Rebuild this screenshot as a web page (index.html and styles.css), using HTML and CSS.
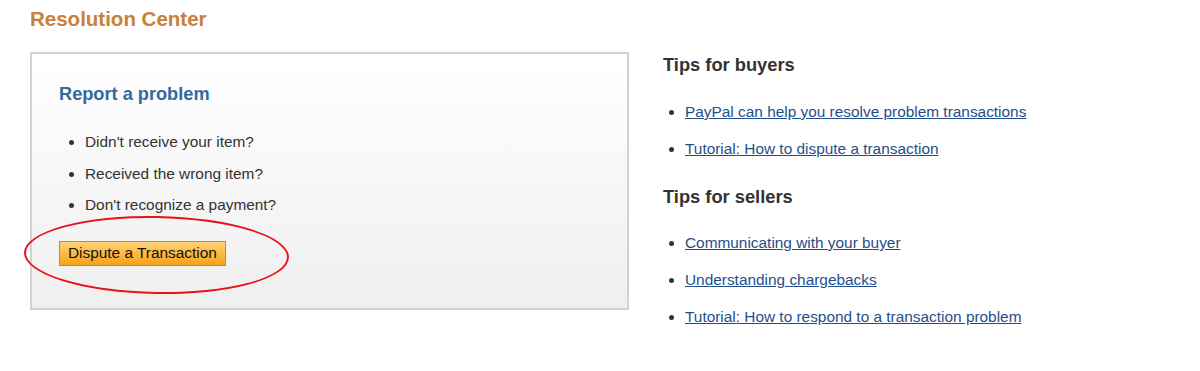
FILE: index.html
```html
<!DOCTYPE html>
<html lang="en">
<head>
  <meta charset="UTF-8">
  <title>Resolution Center</title>
  <link rel="stylesheet" href="styles.css">
</head>
<body>

  <h1 class="page-title">Resolution Center</h1>

  <div class="content">
    <!-- Report a problem box -->
    <div class="report-box">
      <h2>Report a problem</h2>
      <ul class="problem-list">
        <li>Didn't receive your item?</li>
        <li>Received the wrong item?</li>
        <li>Don't recognize a payment?</li>
      </ul>
      <div class="btn-wrap">
        <button class="btn-dispute">Dispute a Transaction</button>
        <span class="circle-mark"></span>
      </div>
    </div>

    <!-- Tips -->
    <div class="tips">
      <h3>Tips for buyers</h3>
      <ul class="tips-list">
        <li><a href="#">PayPal can help you resolve problem transactions</a></li>
        <li><a href="#">Tutorial: How to dispute a transaction</a></li>
      </ul>
      <h3>Tips for sellers</h3>
      <ul class="tips-list sellers">
        <li><a href="#">Communicating with your buyer</a></li>
        <li><a href="#">Understanding chargebacks</a></li>
        <li><a href="#">Tutorial: How to respond to a transaction problem</a></li>
      </ul>
    </div>
  </div>

</body>
</html>
```

FILE: styles.css
```css
body {
  margin: 0;
  padding: 0 30px;
  font-family: "Liberation Sans", Arial, sans-serif;
  background-color: #fff;
  color: #333;
}

.page-title {
  margin: 0;
  padding-top: 8px;
  height: 44px;
  font-size: 20.5px;
  line-height: 22px;
  color: #c8803a;
}

.content {
  display: flex;
  align-items: flex-start;
  gap: 34px;
}

.report-box {
  width: 541px;
  height: 222px;
  padding: 16px 27px 16px 27px;
  border: 2px solid #d2d2d2;
  background: linear-gradient(#ffffff, #efefef);
}

.report-box h2 {
  margin: 14px 0 0 0;
  font-size: 18.2px;
  line-height: 20px;
  color: #34699e;
}

.problem-list {
  margin: 29px 0 0 0;
  padding-left: 26px;
  font-size: 15.4px;
  line-height: 18px;
  color: #333;
}

.problem-list li {
  margin-bottom: 13.5px;
}

.btn-wrap {
  position: relative;
  margin-top: 27px;
}

.btn-dispute {
  font-family: "Liberation Sans", Arial, sans-serif;
  font-size: 15.4px;
  line-height: 18px;
  padding: 2px 8px 3px 8px;
  color: #111;
  border: 1px solid #c98a2a;
  border-radius: 0;
  background: linear-gradient(#ffd27a, #ffb940 50%, #f6a21c);
  cursor: pointer;
}

.circle-mark {
  position: absolute;
  left: -35px;
  top: -25px;
  width: 261px;
  height: 74px;
  border: 2px solid #e8131a;
  border-radius: 50%;
  transform: rotate(1deg);
  pointer-events: none;
}

.tips h3 {
  margin: 3px 0 0 0;
  font-size: 18.3px;
  line-height: 20px;
  color: #333;
}

.tips-list {
  margin: 28px 0 29px 0;
  padding-left: 22px;
  font-size: 15.4px;
  line-height: 18px;
}

.tips-list.sellers {
  margin-top: 27px;
}

.tips-list li {
  margin-bottom: 19px;
}

.tips-list li:last-child {
  margin-bottom: 0;
}

.tips-list a {
  color: #1f4f8a;
}
```
